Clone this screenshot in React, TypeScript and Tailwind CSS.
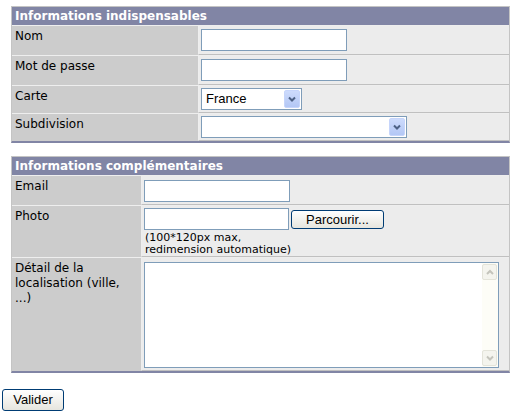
const verdana = "font-['DejaVu_Sans',Verdana,sans-serif]";
const arial = "font-['Liberation_Sans',Arial,sans-serif]";

function TextInput({ w }: { w: string }) {
  return <div className={`h-[22px] border border-[#7f9db9] bg-white ${w}`} />;
}

function Chevron({ up, color }: { up?: boolean; color: string }) {
  return (
    <svg width="8" height="6" viewBox="0 0 8 6">
      <path
        d={up ? "M1 5 L4 2 L7 5" : "M1 1.5 L4 4.5 L7 1.5"}
        stroke={color}
        strokeWidth="2"
        fill="none"
      />
    </svg>
  );
}

function Select({ w, value }: { w: string; value?: string }) {
  return (
    <div className={`flex h-[22px] items-center border border-[#7f9db9] bg-white ${w}`}>
      <span className={`flex-1 pl-[4px] text-[13px] leading-[20px] ${arial}`}>{value}</span>
      <div className="mr-px flex h-[18px] w-[16px] items-center justify-center rounded-[2px] border border-[#c6d5fb] bg-gradient-to-b from-[#cddbfc] to-[#b3c7f5]">
        <Chevron color="#4d6185" />
      </div>
    </div>
  );
}

function XpButton({ children, className }: { children: string; className: string }) {
  return (
    <button
      className={`flex items-center justify-center rounded-[3px] border border-[#003c74] bg-gradient-to-b from-white to-[#e6e5de] text-[13px] text-black ${arial} ${className}`}
    >
      {children}
    </button>
  );
}

function TextArea() {
  return (
    <div className="flex h-[106px] w-[355px] border border-[#7f9db9] bg-white">
      <div className="flex-1" />
      <div className="flex w-[16px] flex-col justify-between bg-[#fdfdf7] py-px pr-px">
        <div className="flex h-[16px] w-[15px] items-center justify-center rounded-[2px] border border-[#e4e4da] bg-[#f4f4ee]">
          <Chevron up color="#c4c4bc" />
        </div>
        <div className="flex h-[16px] w-[15px] items-center justify-center rounded-[2px] border border-[#e4e4da] bg-[#f4f4ee]">
          <Chevron color="#c4c4bc" />
        </div>
      </div>
    </div>
  );
}

type Row = { label: string; h: string; pad: string; field: React.ReactNode };

function Section({ title, labelW, rows, className }: { title: string; labelW: string; rows: Row[]; className?: string }) {
  return (
    <div className={`ml-[11px] w-[499px] border-x border-t border-b-2 border-[#c4c4c4] border-b-[#8185a5] ${className ?? ""}`}>
      <div className="h-[18px] bg-[#8185a5] pl-[3px] text-[12px] font-bold leading-[18px] text-white">{title}</div>
      {rows.map((r) => (
        <div key={r.label} className="flex border-t border-[#eeeeee]">
          <div className={`${labelW} shrink-0 bg-[#cccccc] px-[3px] pt-[3px] text-[12px] leading-[15px] text-black`}>
            {r.label}
          </div>
          <div className={`flex-1 border-b border-l border-[#c0c0c0] border-l-[#eeeeee] bg-[#ececec] pl-[2px] ${r.h} ${r.pad}`}>
            {r.field}
          </div>
        </div>
      ))}
    </div>
  );
}

export default function App() {
  return (
    <div className={`h-[417px] w-[521px] overflow-hidden bg-white pt-[6px] ${verdana}`}>
      <Section
        title="Informations indispensables"
        labelW="w-[186px]"
        rows={[
          { label: "Nom", h: "h-[29px]", pad: "pt-[3px]", field: <TextInput w="w-[146px]" /> },
          { label: "Mot de passe", h: "h-[29px]", pad: "pt-[3px]", field: <TextInput w="w-[146px]" /> },
          { label: "Carte", h: "h-[27px]", pad: "pt-[2px]", field: <Select w="w-[101px]" value="France" /> },
          { label: "Subdivision", h: "h-[27px]", pad: "pt-[2px]", field: <Select w="w-[206px]" /> },
        ]}
      />

      <Section
        className="mt-[13px]"
        title="Informations complémentaires"
        labelW="w-[129px]"
        rows={[
          { label: "Email", h: "h-[29px]", pad: "pt-[4px]", field: <TextInput w="w-[146px]" /> },
          {
            label: "Photo",
            h: "h-[51px]",
            pad: "pt-[2px]",
            field: (
              <div>
                <div className="flex items-end gap-[2px]">
                  <TextInput w="w-[145px]" />
                  <XpButton className="mb-px h-[19px] w-[93px]">Parcourir...</XpButton>
                </div>
                <p className="mt-[2px] pl-px text-[11px] leading-[12px] text-black">
                  (100*120px max,
                  <br />
                  redimension automatique)
                </p>
              </div>
            ),
          },
          { label: "Détail de la localisation (ville, ...)", h: "h-[113px]", pad: "pt-[4px]", field: <TextArea /> },
        ]}
      />

      <XpButton className="ml-[2px] mt-[16px] h-[22px] w-[62px]">Valider</XpButton>
    </div>
  );
}
